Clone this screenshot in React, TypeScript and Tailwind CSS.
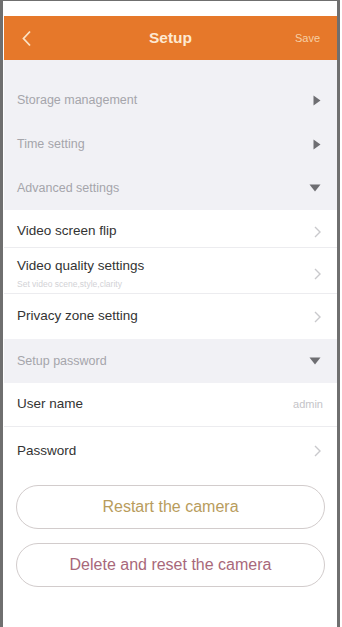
const font = { fontFamily: '"Liberation Sans", Arial, sans-serif' };

function RightTri() {
  return (
    <svg width="8" height="11" viewBox="0 0 8 11" className="shrink-0">
      <path d="M0.5 0.5 L7.5 5.5 L0.5 10.5 Z" fill="#6e6e72" />
    </svg>
  );
}

function DownTri() {
  return (
    <svg width="12" height="8" viewBox="0 0 12 8" className="shrink-0">
      <path d="M0.5 0.5 L11.5 0.5 L6 7.5 Z" fill="#6e6e72" />
    </svg>
  );
}

function Chevron() {
  return (
    <svg width="7" height="12" viewBox="0 0 7 12" className="shrink-0">
      <path d="M1 1 L6 6 L1 11" fill="none" stroke="#c9c9cc" strokeWidth="1.4" />
    </svg>
  );
}

function GroupRow({ label, icon }: { label: string; icon: "right" | "down" }) {
  return (
    <div className="h-[44px] flex items-center justify-between pl-[13px] pr-[16px]">
      <span className="text-[12.5px] text-[#a5a5ab]">{label}</span>
      {icon === "right" ? <RightTri /> : <DownTri />}
    </div>
  );
}

export default function App() {
  return (
    <div className="w-[342px] h-[627px] bg-white overflow-hidden" style={font}>
      <div className="w-[340px] h-[627px] border-l-[3px] border-t border-r-[3px] border-[#6f6f6f] bg-white flex flex-col pt-[15px] pl-[1px]">
        {/* header */}
        <div className="h-[44px] bg-[#e6782a] flex items-center justify-between px-[17px] relative">
          <svg width="11" height="17" viewBox="0 0 11 17">
            <path d="M9 1.5 L2.5 8.5 L9 15.5" fill="none" stroke="#fbe2c4" strokeWidth="1.8" />
          </svg>
          <span className="absolute left-0 right-0 text-center text-[15.5px] font-bold text-[#fde9d2] pointer-events-none">Setup</span>
          <span className="text-[11px] text-[#f6cfa5]">Save</span>
        </div>

        {/* grey group */}
        <div className="bg-[#f1f1f5] pt-[18px]">
          <GroupRow label="Storage management" icon="right" />
          <GroupRow label="Time setting" icon="right" />
          <GroupRow label="Advanced settings" icon="down" />
        </div>

        {/* advanced items */}
        <div className="bg-white">
          <div className="h-[38px] pt-[6px] flex items-center justify-between pl-[13px] pr-[16px] border-b border-[#ececef]">
            <span className="text-[13.5px] text-[#333]">Video screen flip</span>
            <Chevron />
          </div>
          <div className="h-[46px] pt-[6px] flex items-center justify-between pl-[13px] pr-[16px] border-b border-[#ececef]">
            <div className="flex flex-col">
              <span className="text-[13.5px] text-[#333] leading-[16px]">Video quality settings</span>
              <span className="text-[8.5px] text-[#d2d2d6] leading-[10px] mt-[5px]">Set video scene,style,clarity</span>
            </div>
            <Chevron />
          </div>
          <div className="h-[45px] flex items-center justify-between pl-[13px] pr-[16px]">
            <span className="text-[13.5px] text-[#333]">Privacy zone setting</span>
            <Chevron />
          </div>
        </div>

        <div className="bg-[#f1f1f5] h-[44px] flex items-center justify-between pl-[13px] pr-[16px]">
          <span className="text-[12.5px] text-[#a5a5ab]">Setup password</span>
          <DownTri />
        </div>

        <div className="bg-white">
          <div className="h-[44px] flex items-center justify-between pl-[13px] pr-[14px] border-b border-[#ececef]">
            <span className="text-[13.5px] text-[#333]">User name</span>
            <span className="text-[11px] text-[#c4c4c8]">admin</span>
          </div>
          <div className="h-[48px] flex items-center justify-between pl-[13px] pr-[16px]">
            <span className="text-[13.5px] text-[#333]">Password</span>
            <Chevron />
          </div>
        </div>

        <div className="flex flex-col gap-[14px] px-[12px] pt-[10px]">
          <div className="h-[44px] rounded-full border-[1.5px] border-[#d2cccc] flex items-center justify-center">
            <span className="text-[16px] text-[#b89c5c]">Restart the camera</span>
          </div>
          <div className="h-[44px] rounded-full border-[1.5px] border-[#d2cccc] flex items-center justify-center">
            <span className="text-[16px] text-[#a8687a]">Delete and reset the camera</span>
          </div>
        </div>
      </div>
    </div>
  );
}
